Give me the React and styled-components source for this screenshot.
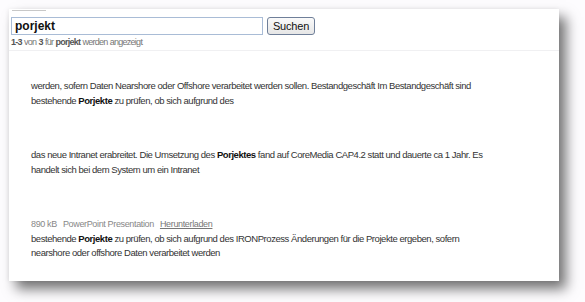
import styled, { createGlobalStyle } from "styled-components";

const GlobalStyle = createGlobalStyle`
  body {
    margin: 0;
    background: #fdfcfe;
    font-family: "Liberation Sans", Arial, sans-serif;
  }
`;

const Page = styled.div`
  padding: 9px 26px 21px 9px;
`;

const Panel = styled.div`
  position: relative;
  width: 550px;
  height: 272px;
  background: #fff;
  box-shadow: 7px 8px 12px rgba(0, 0, 0, 0.55), -1px 0 4px rgba(0, 0, 0, 0.06);
`;

const Tab = styled.div`
  position: absolute;
  left: 3px;
  top: 1px;
  width: 34px;
  height: 1px;
  background: #c8c8c8;
`;

const Header = styled.div`
  padding: 8px 0 0 2px;
  height: 33px;
  border-bottom: 1px solid #f0f0f2;
`;

const SearchRow = styled.div`
  display: flex;
  align-items: center;
  gap: 4px;
`;

const SearchInput = styled.div`
  box-sizing: border-box;
  width: 252px;
  height: 18px;
  border: 1px solid #a9bcd6;
  padding: 0 3px;
  font-size: 12px;
  font-weight: bold;
  color: #111;
  line-height: 16px;
`;

const Button = styled.div`
  box-sizing: border-box;
  width: 48px;
  height: 18px;
  border: 1px solid #6f7f99;
  border-radius: 3px;
  background: linear-gradient(#fafafa, #e6e6e6);
  font-size: 11px;
  letter-spacing: -0.2px;
  color: #111;
  text-align: center;
  line-height: 16px;
`;

const Summary = styled.div`
  margin-top: 2px;
  font-size: 9px;
  letter-spacing: -0.75px;
  word-spacing: 0.5px;
  color: #777;
  b {
    color: #555;
  }
`;

const Results = styled.div`
  padding: 28px 0 0 22px;
  display: flex;
  flex-direction: column;
  gap: 40px;
`;

const Result = styled.div`
  font-size: 9.5px;
  letter-spacing: -0.45px;
  line-height: 14.5px;
  color: #333;
  white-space: nowrap;
  b {
    color: #111;
  }
`;

const Meta = styled.div`
  color: #888;
  font-size: 9px;
  letter-spacing: -0.35px;
  span {
    margin-right: 6px;
  }
  u {
    color: #777;
  }
`;

const App = () => {
  return (
    <>
      <GlobalStyle />
      <Page>
        <Panel>
          <Tab />
          <Header>
            <SearchRow>
              <SearchInput>porjekt</SearchInput>
              <Button>Suchen</Button>
            </SearchRow>
            <Summary>
              <b>1-3</b> von <b>3</b> für <b>porjekt</b> werden angezeigt
            </Summary>
          </Header>
          <Results>
            <Result>
              werden, sofern Daten Nearshore oder Offshore verarbeitet werden sollen. Bestandgeschäft Im Bestandgeschäft sind
              <br />
              bestehende <b>Porjekte</b> zu prüfen, ob sich aufgrund des
            </Result>
            <Result>
              das neue Intranet erabreitet. Die Umsetzung des <b>Porjektes</b> fand auf CoreMedia CAP4.2 statt und dauerte ca 1 Jahr. Es
              <br />
              handelt sich bei dem System um ein Intranet
            </Result>
            <Result>
              <Meta>
                <span>890 kB</span>
                <span>PowerPoint Presentation</span>
                <u>Herunterladen</u>
              </Meta>
              bestehende <b>Porjekte</b> zu prüfen, ob sich aufgrund des IRONProzess Änderungen für die Projekte ergeben, sofern
              <br />
              nearshore oder offshore Daten verarbeitet werden
            </Result>
          </Results>
        </Panel>
      </Page>
    </>
  );
};

export default App;
